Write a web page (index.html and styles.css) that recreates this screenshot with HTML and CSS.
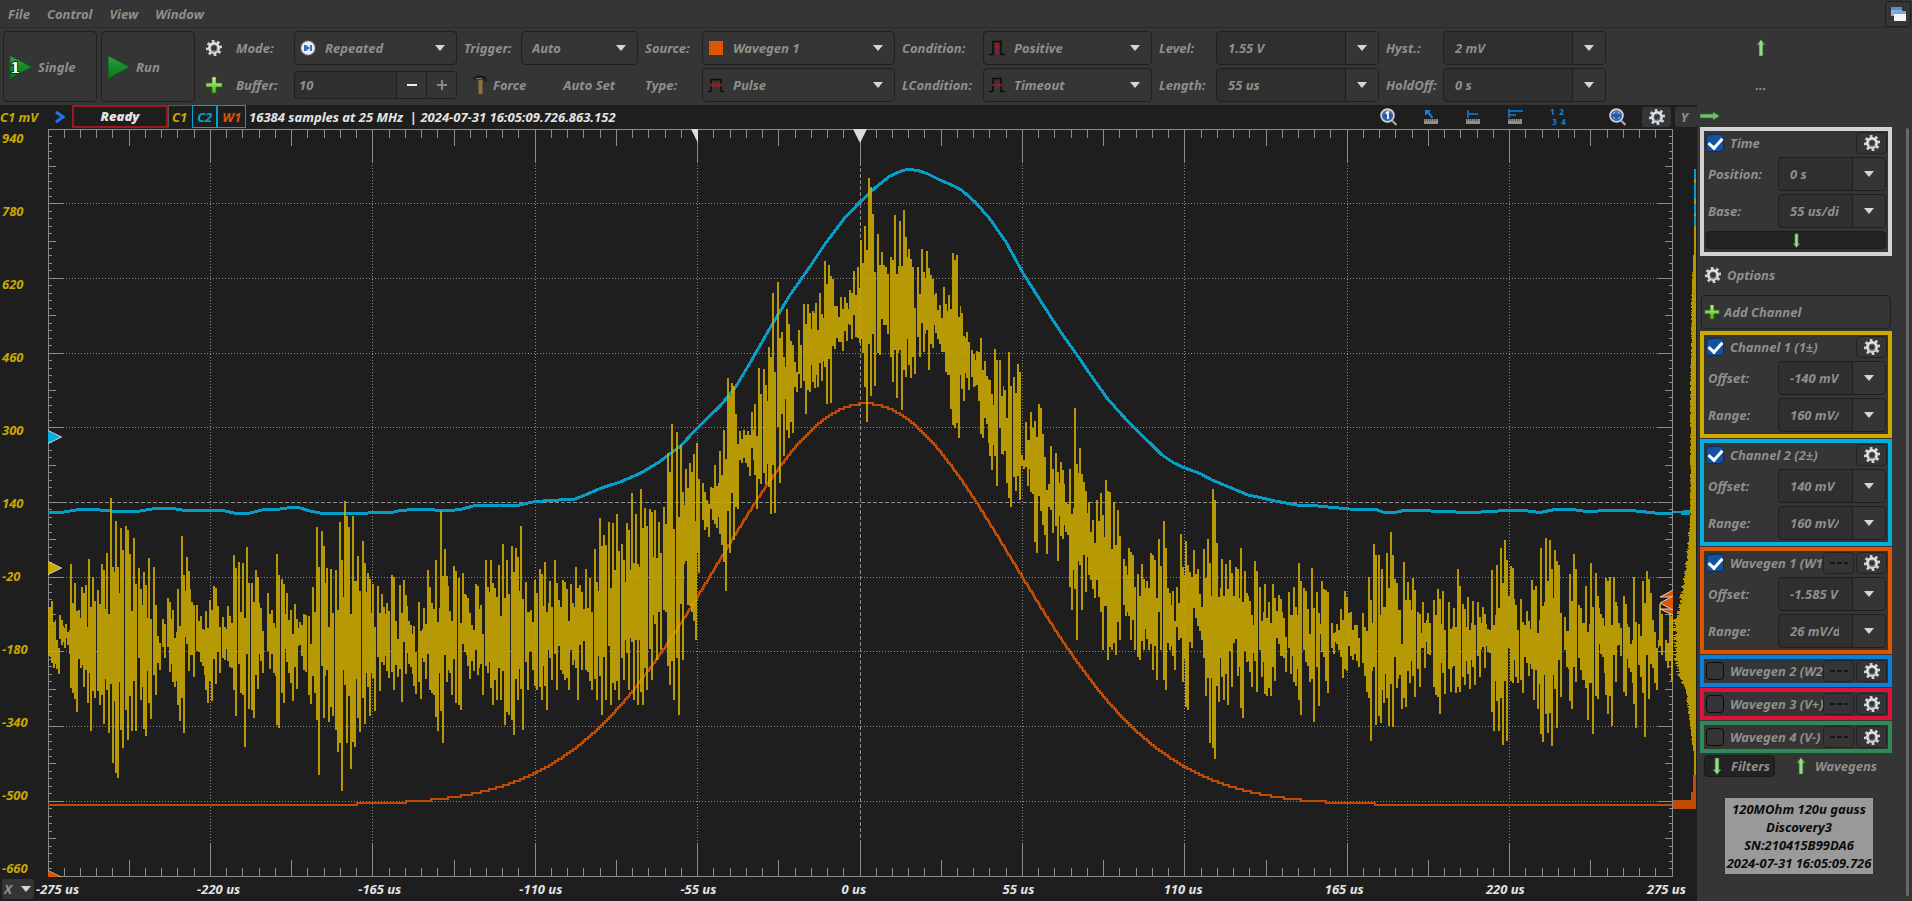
FILE: index.html
```html
<!DOCTYPE html>
<html lang="en">
<head>
<meta charset="utf-8">
<title>Scope</title>
<link rel="stylesheet" href="styles.css">
</head>
<body>
<svg class="defs" aria-hidden="true">
  <defs>
    <linearGradient id="gPlay" x1="0" y1="0" x2="0" y2="1"><stop offset="0" stop-color="#3fa04a"/><stop offset=".5" stop-color="#158a28"/><stop offset="1" stop-color="#0f7a20"/></linearGradient>
    <linearGradient id="gPlus" x1="0" y1="0" x2="0" y2="1"><stop offset="0" stop-color="#c8f09a"/><stop offset="1" stop-color="#46b814"/></linearGradient>
    <linearGradient id="gArrow" x1="0" y1="0" x2="1" y2="0"><stop offset="0" stop-color="#4faa45"/><stop offset=".5" stop-color="#a4e09a"/><stop offset="1" stop-color="#3f9a38"/></linearGradient>
    <linearGradient id="gLens" x1="0" y1="0" x2="0" y2="1"><stop offset="0" stop-color="#6d8fc8"/><stop offset=".5" stop-color="#2a559f"/><stop offset="1" stop-color="#2f78c8"/></linearGradient>
    <symbol id="gear" viewBox="0 0 18 18">
      <circle cx="9" cy="9" r="6.7" fill="none" stroke="#cfd6da" stroke-width="2.8" stroke-dasharray="2.6 2.662" transform="rotate(-20 9 9)"/>
      <circle cx="9" cy="9" r="4.5" fill="none" stroke="#dde2e5" stroke-width="3"/>
      <path d="M6 11.500A4 4 0 0 0 12.400 11" fill="none" stroke="#9aa3a8" stroke-width="1.500"/>
      <circle cx="9" cy="9" r="3" fill="none" stroke="#59666e" stroke-width="1"/>
    </symbol>
    <symbol id="plus" viewBox="0 0 18 18"><path d="M7 1h4v6h6v4h-6v6H7v-6H1V7h6z" fill="url(#gPlus)" stroke="#2c6e12" stroke-width=".6"/></symbol>
    <symbol id="up" viewBox="0 0 10 18"><path d="M5 .5L9.200 6H7v11H3V6H.8z" fill="url(#gArrow)" stroke="#2c6a2a" stroke-width=".6"/></symbol>
    <symbol id="down" viewBox="0 0 10 18"><path d="M5 17.500L.8 12.500H3V1h4v11.500h2.200z" fill="url(#gArrow)" stroke="#2c6a2a" stroke-width=".6"/></symbol>
    <symbol id="lens" viewBox="0 0 18 18"><path d="M12.500 13l4 4" stroke="#a9a9a4" stroke-width="2.200"/><circle cx="7.500" cy="7.500" r="6.400" fill="url(#gLens)" stroke="#d2d2d2" stroke-width="1.800"/></symbol>
    <symbol id="ruler" viewBox="0 0 14 5"><path d="M0 0h14v5H0z" fill="#8f8f8f"/><path d="M1.500 0v2M3.500 0v2M5.500 0v2M7.500 0v2M9.500 0v2M11.500 0v2" stroke="#555"/></symbol>
    <symbol id="line" viewBox="0 0 20 4"><path d="M1 2h5M8 2h5M15 2h4" stroke="#0c0c0c" stroke-width="1.500"/></symbol>
  </defs>
</svg>

<nav class="menubar">
  <button>File</button><button>Control</button><button>View</button><button>Window</button>
  <button class="dock" aria-label="Windows"><svg width="16" height="16" viewBox="0 0 16 16"><path d="M1 1h11v9H1z" fill="#8fb0dc"/><path d="M1 1h11v3H1z" fill="#5d8ccc"/><path d="M4 5h12v10H4z" fill="#f2f5fb"/><path d="M4 5h12v3H4z" fill="#7aa4e0"/></svg></button>
</nav>

<section class="toolbar">
  <button class="run"><svg width="24" height="26" viewBox="0 0 24 26"><path d="M1 1.500L23 13 1 24.500z" fill="url(#gPlay)" stroke="#0b5a18"/><text x="1" y="19" class="one">1</text></svg>Single</button>
  <button class="run"><svg width="24" height="26" viewBox="0 0 24 26"><path d="M1 1.500L23 13 1 24.500z" fill="url(#gPlay)" stroke="#0b5a18"/></svg>Run</button>
  <button class="flat" aria-label="Settings"><svg width="18" height="18"><use href="#gear"/></svg></button>
  <label for="mode">Mode:</label>
  <span class="select icon"><svg width="16" height="16" viewBox="0 0 16 16"><circle cx="8" cy="8" r="7" fill="#e9edf5" stroke="#999"/><path d="M5 5v6M11 5v6" stroke="#3a6cb8" stroke-width="2"/><path d="M6 5l4 3-4 3z" fill="#3a6cb8"/></svg><select id="mode"><option>Repeated</option></select></span>
  <label for="trig">Trigger:</label>
  <span class="select"><select id="trig"><option>Auto</option></select></span>
  <label for="src">Source:</label>
  <span class="select icon"><svg width="16" height="16" viewBox="0 0 16 16"><path d="M1 1h14v14H1z" fill="#dd5500"/></svg><select id="src"><option>Wavegen 1</option></select></span>
  <label for="cond">Condition:</label>
  <span class="select icon"><svg width="16" height="16" viewBox="0 0 16 16"><path d="M0 14.500h4V1.500h8v13h4" fill="none" stroke="#0c0c0c" stroke-width="1.500"/><path d="M8 15V5" stroke="#a01820" stroke-width="2"/><path d="M5 7l3-5 3 5z" fill="#a01820"/></svg><select id="cond"><option>Positive</option></select></span>
  <label for="level">Level:</label>
  <span class="combo"><input id="level" value="1.55 V"><button aria-label="Level list"></button></span>
  <label for="hyst">Hyst.:</label>
  <span class="combo"><input id="hyst" value="2 mV"><button aria-label="Hysteresis list"></button></span>
  <button class="flat" aria-label="Collapse"><svg width="10" height="18"><use href="#up"/></svg></button>

  <button class="flat second" aria-label="Add"><svg width="18" height="18"><use href="#plus"/></svg></button>
  <label for="buf">Buffer:</label>
  <span class="spin"><input id="buf" value="10"><button class="lit" aria-label="Less"></button><button class="more" aria-label="More"></button></span>
  <span class="actions"><button><svg width="14" height="20" viewBox="0 0 14 20"><path d="M1 4q5-4 11-1l1 3" fill="none" stroke="#1b1b1b" stroke-width="3"/><path d="M3 3.500h6" stroke="#777"/><path d="M5.500 5h4v14h-4z" fill="#93713a"/></svg>Force</button><button class="autoset">Auto Set</button></span>
  <label for="type">Type:</label>
  <span class="select icon"><svg width="16" height="16" viewBox="0 0 16 16"><path d="M0 14.500h3V2.500h10v12h3" fill="none" stroke="#0c0c0c" stroke-width="1.500"/><path d="M3 8h10" stroke="#a01820" stroke-width="2"/><path d="M1.500 8L6 5v6zM14.500 8L10 5v6z" fill="#a01820"/></svg><select id="type"><option>Pulse</option></select></span>
  <label for="lcond">LCondition:</label>
  <span class="select icon"><svg width="16" height="16" viewBox="0 0 16 16"><path d="M0 14.500h4V1.500h8v13h4" fill="none" stroke="#0c0c0c" stroke-width="1.500"/><path d="M3 8h9" stroke="#a01820" stroke-width="1.500"/><path d="M13 8L8 5v6z" fill="#a01820"/></svg><select id="lcond"><option>Timeout</option></select></span>
  <label for="len">Length:</label>
  <span class="combo"><input id="len" value="55 us"><button aria-label="Length list"></button></span>
  <label for="hold">HoldOff:</label>
  <span class="combo"><input id="hold" value="0 s"><button aria-label="HoldOff list"></button></span>
  <button class="flat">...</button>
</section>

<main class="scope">
  <header class="status">
    <span class="unit">C1 mV</span>
    <svg width="12" height="14" viewBox="0 0 12 14"><path d="M2 2l7 5-7 5" fill="none" stroke="#1f74f0" stroke-width="3"/></svg>
    <strong class="state">Ready</strong>
    <button class="tag c1">C1</button><button class="tag c2">C2</button><button class="tag w1">W1</button>
    <span class="info">16384 samples at 25 MHz  | 2024-07-31 16:05:09.726.863.152</span>
    <span class="tools">
      <button aria-label="Zoom 1"><svg width="18" height="18" viewBox="0 0 18 18"><use href="#lens"/><path d="M6 5.500L8 4v7" fill="none" stroke="#fff" stroke-width="1.700"/></svg></button>
      <button aria-label="Cursor"><svg width="16" height="16" viewBox="0 0 16 16"><path d="M2 1h6L6.200 3l4 5-1.500 1.500-4-5L2 6.500z" fill="#0a84e8"/><use href="#ruler" x="1" y="10" width="14" height="5"/></svg></button>
      <button aria-label="X cursor"><svg width="16" height="16" viewBox="0 0 16 16"><path d="M3 1v8M3 5h10" stroke="#0a84e8" stroke-width="1.500" fill="none"/><use href="#ruler" x="1" y="10" width="14" height="5"/></svg></button>
      <button aria-label="Y cursor"><svg width="16" height="16" viewBox="0 0 16 16"><path d="M2 0v9M2 2h14M2 6h7" stroke="#0a84e8" stroke-width="1.500" fill="none"/><use href="#ruler" x="1" y="10" width="14" height="5"/></svg></button>
      <button class="nums" aria-label="Labels"><span>1</span><span>2</span><span class="low">3</span><span class="low">4</span></button>
      <button class="wide" aria-label="Zoom fit"><svg width="18" height="18" viewBox="0 0 18 18"><use href="#lens"/><path d="M4 6l2-2M11 6L9 4M4 9l2 2M11 9l-2 2" stroke="#a9c4ee"/></svg></button>
      <button class="box" aria-label="Plot settings"><svg width="18" height="18"><use href="#gear"/></svg></button>
      <button class="box ybtn">Y</button>
    </span>
  </header>
  <div class="yaxis"><span>940</span><span>780</span><span>620</span><span>460</span><span>300</span><span>140</span><span>-20</span><span>-180</span><span>-340</span><span>-500</span><span>-660</span></div>
  <div class="plot"><svg id="plot" viewBox="48 129 1649 748" preserveAspectRatio="none" role="img" aria-label="Oscilloscope traces"></svg></div>
  <footer class="xaxis">
    <span class="xsel"><select aria-label="X axis"><option>X</option></select></span>
    <div class="xlabels"><span>-275 us</span><span>-220 us</span><span>-165 us</span><span>-110 us</span><span>-55 us</span><span>0 us</span><span>55 us</span><span>110 us</span><span>165 us</span><span>220 us</span><span>275 us</span></div>
  </footer>
</main>

<aside class="side">
  <button class="expand" aria-label="Collapse panel"><svg width="20" height="10" viewBox="0 0 20 10"><path d="M0 3h13V.8L19.500 5 13 9.200V7H0z" fill="#6fbf66" stroke="#2c6a2a" stroke-width=".6"/></svg></button>
  <div class="panel time">
    <div class="head"><input type="checkbox" id="t" checked><label for="t">Time</label><button class="cfg" aria-label="Time settings"><svg width="18" height="18"><use href="#gear"/></svg></button></div>
    <div class="row"><label for="tp">Position:</label><span class="combo"><input id="tp" value="0 s"><button aria-label="Position list"></button></span></div>
    <div class="row"><label for="tb">Base:</label><span class="combo"><input id="tb" value="55 us/div"><button aria-label="Base list"></button></span></div>
    <button class="drop" aria-label="More"><svg width="9" height="15"><use href="#down"/></svg></button>
  </div>
  <button class="options"><svg width="18" height="18"><use href="#gear"/></svg>Options</button>
  <button class="add"><svg width="16" height="16"><use href="#plus"/></svg>Add Channel</button>
  <div class="panels">
    <div class="panel ch1">
      <div class="head"><input type="checkbox" id="c1" checked><label for="c1">Channel 1 (1±)</label><button class="cfg" aria-label="Channel 1 settings"><svg width="18" height="18"><use href="#gear"/></svg></button></div>
      <div class="row"><label for="c1o">Offset:</label><span class="combo"><input id="c1o" value="-140 mV"><button aria-label="Offset list"></button></span></div>
      <div class="row"><label for="c1r">Range:</label><span class="combo"><input id="c1r" value="160 mV/div"><button aria-label="Range list"></button></span></div>
    </div>
    <div class="panel ch2">
      <div class="head"><input type="checkbox" id="c2" checked><label for="c2">Channel 2 (2±)</label><button class="cfg" aria-label="Channel 2 settings"><svg width="18" height="18"><use href="#gear"/></svg></button></div>
      <div class="row"><label for="c2o">Offset:</label><span class="combo"><input id="c2o" value="140 mV"><button aria-label="Offset list"></button></span></div>
      <div class="row"><label for="c2r">Range:</label><span class="combo"><input id="c2r" value="160 mV/div"><button aria-label="Range list"></button></span></div>
    </div>
    <div class="panel wg1">
      <div class="head"><input type="checkbox" id="w1" checked><label for="w1">Wavegen 1 (W1</label><button class="cfg" aria-label="Wavegen 1 line"><svg width="20" height="4"><use href="#line"/></svg></button><button class="cfg" aria-label="Wavegen 1 settings"><svg width="18" height="18"><use href="#gear"/></svg></button></div>
      <div class="row"><label for="w1o">Offset:</label><span class="combo"><input id="w1o" value="-1.585 V"><button aria-label="Offset list"></button></span></div>
      <div class="row"><label for="w1r">Range:</label><span class="combo"><input id="w1r" value="26 mV/div"><button aria-label="Range list"></button></span></div>
    </div>
    <div class="panel wg2"><div class="head"><input type="checkbox" id="w2"><label for="w2">Wavegen 2 (W2</label><button class="cfg" aria-label="Wavegen 2 line"><svg width="20" height="4"><use href="#line"/></svg></button><button class="cfg" aria-label="Wavegen 2 settings"><svg width="18" height="18"><use href="#gear"/></svg></button></div></div>
    <div class="panel wg3"><div class="head"><input type="checkbox" id="w3"><label for="w3">Wavegen 3 (V+)</label><button class="cfg" aria-label="Wavegen 3 line"><svg width="20" height="4"><use href="#line"/></svg></button><button class="cfg" aria-label="Wavegen 3 settings"><svg width="18" height="18"><use href="#gear"/></svg></button></div></div>
    <div class="panel wg4"><div class="head"><input type="checkbox" id="w4"><label for="w4">Wavegen 4 (V-)</label><button class="cfg" aria-label="Wavegen 4 line"><svg width="20" height="4"><use href="#line"/></svg></button><button class="cfg" aria-label="Wavegen 4 settings"><svg width="18" height="18"><use href="#gear"/></svg></button></div></div>
  </div>
  <div class="tabs"><button class="on"><svg width="10" height="18"><use href="#down"/></svg>Filters</button><button><svg width="10" height="18"><use href="#up"/></svg>Wavegens</button></div>
  <p class="note">120MOhm 120u gauss<br>Discovery3<br>SN:210415B99DA6<br>2024-07-31 16:05:09.726</p>
</aside>
<script src="plot.js"></script>
</body>
</html>
```

FILE: styles.css
```css
* { box-sizing: border-box; }
body {
  margin: 0; min-height: 100vh; background: #353535; color: #8f8f8b;
  font: italic 700 13px/18px "Noto Sans", "Open Sans", sans-serif;
  display: grid; grid-template-columns: minmax(0, 1fr) 215px; grid-template-rows: 28px 77px minmax(0, 1fr);
}
.defs { position: absolute; width: 0; height: 0; }
svg { display: block; flex: none; }
button, input, select { font: inherit; color: inherit; background: none; border: 0; margin: 0; padding: 0; border-radius: 0; min-width: 0; }
input, select { outline: 0; }
label { white-space: nowrap; overflow: hidden; }

.menubar { grid-column: 1 / -1; display: flex; gap: 17px; align-items: center; padding: 0 1px 0 8px; border-bottom: 1px solid #2a2a2a; }
.dock { margin-left: auto; width: 26px; height: 26px; border: 1px solid #1f1f1f; border-radius: 4px; display: grid; place-items: center; }

.toolbar {
  grid-column: 1 / -1; display: grid; gap: 3px 4px; padding: 3px 0 3px 3px; align-items: center; grid-template-rows: 34px 34px;
  grid-template-columns: 94px 94px 30px 57px minmax(90px, 163px) 56px minmax(80px, 117px) 56px minmax(90px, 193px) 80px minmax(90px, 169px) 56px minmax(80px, 163px) 56px minmax(80px, 163px) minmax(20px, 1fr);
}
.toolbar label { padding-left: 3px; }
.run { grid-row: span 2; height: 71px; border: 1px solid #1f1f1f; border-radius: 4px; display: flex; align-items: center; gap: 5px; padding-left: 5px; }
.one { font: 700 15px "DejaVu Serif", serif; fill: #fff; stroke: #222; stroke-width: 2px; paint-order: stroke; }
.flat { display: grid; place-items: center; }
.second { grid-column: 3; }
.select { position: relative; height: 34px; border: 1px solid #1f1f1f; border-radius: 4px; display: flex; }
.select select { appearance: none; flex: 1; padding: 0 28px 0 10px; }
.select.icon select { padding-left: 30px; }
.select svg { position: absolute; left: 5px; top: 8px; pointer-events: none; }
.select::after, .xsel::after { content: ""; position: absolute; right: 11px; top: 13px; border: 5px solid transparent; border-top: 6px solid #d6d6d6; border-bottom: 0; pointer-events: none; }
.combo { height: 34px; display: flex; border: 1px solid #1f1f1f; border-radius: 4px; background: #2f2f2f; overflow: hidden; }
.combo input { flex: 1; width: 0; padding: 0 13px 0 11px; }
.combo button { width: 33px; border-left: 1px solid #1f1f1f; background: #353535; display: grid; place-items: center; }
.combo button::before { content: ""; border: 5px solid transparent; border-top: 6px solid #d6d6d6; border-bottom: 0; }
.spin { height: 28px; display: flex; border: 1px solid #1f1f1f; border-radius: 4px; background: #2f2f2f; }
.spin input { flex: 1; width: 0; padding: 0 4px; }
.spin button { width: 30px; border-left: 1px solid #1f1f1f; background: #353535; display: grid; place-items: center; }
.spin button::before, .more::after { content: ""; grid-area: 1 / 1; width: 10px; height: 2px; background: #888; }
.spin .lit::before { background: #eee; }
.spin .more::after { width: 2px; height: 10px; }
.actions { grid-column: span 2; display: flex; align-items: center; padding-left: 12px; }
.actions button { display: flex; align-items: center; gap: 6px; }
.actions .autoset { margin-left: 37px; }

.scope { background: #1e1e1e; display: grid; grid-template-columns: 48px minmax(0, 1fr); grid-template-rows: 24px minmax(0, 1fr) 24px; }
.status { grid-column: 1 / -1; display: flex; align-items: center; color: #e4e4e4; white-space: nowrap; overflow: hidden; padding-bottom: 1px; }
.unit { width: 54px; color: #c9a800; }
.state { width: 96px; height: 23px; line-height: 19px; margin-left: 6px; border: 2px solid #9e1820; text-align: center; }
.tag { height: 23px; border: 1px solid; padding: 0 4px; }
.tag.c1 { color: #c9a800; border-color: #555 transparent transparent #555; padding-left: 3px; }
.tag.c2 { color: #05a5d0; }
.tag.w1 { color: #dd5500; }
.info { padding-left: 3px; white-space: pre; }
.tools { margin-left: auto; display: flex; align-items: center; }
.tools button { width: 42px; display: grid; place-items: center; }
.tools .wide { width: 64px; padding-left: 16px; }
.tools .box { width: 29px; height: 20px; background: #353535; border-radius: 3px; }
.tools .ybtn { width: 22px; margin-left: 4px; padding-right: 3px; color: #8f8f8b; }
.tools .nums { grid-template-columns: 9px 9px; justify-content: center; font: 700 8px/10px "Noto Sans", sans-serif; color: #0a84e8; }
.nums .low { padding-left: 4px; }
.yaxis { display: flex; flex-direction: column; justify-content: space-between; color: #c9a800; padding-left: 2px; }
.plot { position: relative; min-height: 300px; }
.plot svg { position: absolute; inset: 0; width: 100%; height: 100%; }
.xaxis { grid-column: 1 / -1; display: flex; align-items: center; color: #e4e4e4; }
.xsel { position: relative; width: 32px; height: 20px; margin: 0 2px; background: #353535; border-radius: 3px; color: #8f8f8b; display: flex; }
.xsel select { appearance: none; flex: 1; padding-left: 2px; }
.xsel::after { right: 3px; top: 7px; }
.xlabels { flex: 1; display: grid; grid-template-columns: repeat(10, minmax(0, 1fr)) 50px; white-space: nowrap; }

.side { padding: 0 20px 5px 3px; position: relative; }
.side::after { content: ""; position: absolute; right: 3px; top: 23px; bottom: 5px; width: 3px; border-radius: 2px; background: #686868; }
.expand { display: flex; height: 22px; align-items: center; }
.panel { border: 4px solid; padding: 1px 1px 2px 2px; display: grid; grid-template-columns: minmax(0, 1fr); gap: 3px; }
.panels { display: grid; grid-template-columns: minmax(0, 1fr); gap: 1px; }
.time { border-color: #d4d2d2; padding-bottom: 3px; }
.ch1 { border-color: #cfa800; }
.ch2 { border-color: #05aedc; }
.wg1 { border-color: #dd5500; }
.wg2 { border-color: #0780de; padding-bottom: 1px; }
.wg3 { border-color: #dc143c; padding-bottom: 1px; }
.wg4 { border-color: #2e8b57; padding-bottom: 1px; }
.head { display: flex; height: 22px; align-items: center; gap: 2px; }
.head label { flex: 1; min-width: 0; margin: 0 -2px 0 4px; }
.head .cfg { width: 31px; height: 22px; border: 1px solid #222; border-radius: 4px; display: grid; place-items: center; flex: none; }
.head input { appearance: none; width: 18px; height: 18px; border: 1px solid #0b0b0b; border-radius: 4px; flex: none; display: grid; place-items: center; }
.head input:checked { background: #15529e; border-color: #0a2c58; }
.head input:checked::before { content: ""; width: 6px; height: 11px; border: solid #fff; border-width: 0 3px 3px 0; transform: rotate(42deg); margin-bottom: 3px; }
.row { display: grid; grid-template-columns: 72px minmax(0, 1fr); align-items: center; padding-right: 1px; }
.row label { padding-left: 2px; }
.drop { height: 18px; border: 1px solid #1b1b1b; border-radius: 4px; background: #232323; display: grid; place-items: center; margin-right: 1px; }
.options { display: flex; align-items: center; gap: 5px; height: 39px; padding: 0 0 2px 4px; }
.add { display: flex; align-items: center; gap: 4px; width: 190px; height: 34px; margin: 0 0 2px 1px; padding-left: 2px; border: 1px solid #1f1f1f; border-radius: 4px; }
.tabs { display: flex; gap: 21px; padding: 2px 0 0 4px; }
.tabs button { display: flex; align-items: center; height: 22px; gap: 9px; }
.tabs .on { width: 71px; padding-left: 7px; border: 1px solid #1b1b1b; border-radius: 4px; background: #232323; }
.note { margin: 21px 19px 0 25px; padding: 2px 0; background: #999; color: #0c0c0c; text-align: center; white-space: nowrap; }
```

FILE: plot.js
```js
const svg = document.getElementById('plot');
const L = 48, T = 129, R = 1673, B = 877, DX = 162.4, DY = 74.7;

function add(tag, attrs) {
  const el = document.createElementNS('http://www.w3.org/2000/svg', tag);
  for (const k in attrs) el.setAttribute(k, attrs[k]);
  svg.appendChild(el);
}
function line(d, color, width, extra) {
  add('path', Object.assign({ d, fill: 'none', stroke: color, 'stroke-width': width, 'shape-rendering': 'crispEdges' }, extra));
}

// grid and ticks
let ticks = '', dots = '', dashes = '';
for (let i = 1; i < 100; i++) {
  const x = Math.floor(L + i * DX / 10) + .5;
  const n = i % 10 === 0 ? 33 : i % 5 === 0 ? 17 : 9;
  ticks += `M${x} ${T}v${n}M${x} ${B}v${-n}`;
  const y = Math.floor(T + i * DY / 10) + .5;
  const m = i % 10 === 0 ? 15 : i % 5 === 0 ? 8 : 4;
  ticks += `M${L} ${y}h${m}M${R} ${y}h${-m}`;
  if (i % 10 === 0) {
    const v = `M${x} ${T + 33}V${B - 33}`, h = `M${L + 15} ${y}H${R - 15}`;
    if (i === 50) dashes += v + h; else dots += v + h;
  }
}
line(`M48.5 129.500H1672.500V876.500H48.500z`, '#8c8c8c', 1);
line(ticks, '#8c8c8c', 1);
line(dots, '#8c8c8c', 1, { 'stroke-dasharray': '1 2' });
line(dashes, '#8c8c8c', 1, { 'stroke-dasharray': '4 2' });

// wavegen: gaussian pulse quantised by the converter
let g = '', last = null;
for (let x = 48; x <= 1672; x++) {
  const y = 805 - 2 * Math.round(401.5 * Math.exp(-((x - 865.5) ** 2) / (2 * 147 * 147)) / 2);
  g += last === null ? `M${x} ${y}` : y !== last ? `H${x}V${y}` : '';
  last = y;
}
line(g + 'H1672', '#bf4c06', 2);

// channel 2
const ch2 = [48,512.5,64,512,76,510,90,509,110,511,140,511,155,508.5,170,508,185,510.5,212,510.5,225,511,238,514,250,513,262,510,280,509,290,507.5,300,508,310,511,322,513.5,345,513.5,392,512.5,400,510.5,420,509,435,510,448,511,462,509,475,505.5,500,505,515,506,535,501.5,575,499,584,495.5,600,488.5,620,482,640,473.5,660,461.5,680,446.5,697,428.5,720,406,735,388,750,363,770,328,790,295,810,266.5,825,244,845,217.5,860,202,875,188,890,176,900,171.5,905,170,910,169.5,918,170.5,928,174,940,180,955,186.5,962,190.5,975,202,990,219,1006,242,1023,273,1040,300,1060,331,1076,353.5,1090,374,1107,398,1122,415,1136,429.5,1152,445,1162,455,1174,463,1185,468,1200,473.5,1212,480,1235,489.5,1248,495,1260,497.5,1275,501,1297,505,1318,506,1349,509,1376,509.5,1383,512,1397,512,1404,510.5,1424,510.5,1438,511.5,1473,512.5,1490,511.5,1507,510.5,1524,510.5,1540,512.5,1555,509.5,1573,509.5,1586,511.5,1610,510.5,1631,510.5,1655,513,1672,514];
line('M' + ch2.join(' '), '#069ec6', 3, { 'stroke-linejoin': 'round' });

// channel 1: position, upper peak, lower peak
const ch1 = `49 607 657,52 601 668,57 640 674,60 615 645,63 626 648,66 624 645,71 564 693,75 583 712,79 610 668,82 587 687,86 585 703,89 559 731,93 577 698,98 590 705,102 564 724,107 553 733,111 498 763,116 521 778,121 528 748,126 526 740,130 554 731,134 538 731,139 568 700,144 572 736,149 558 719,154 567 695,158 636 670,163 619 658,168 598 672,173 610 687,178 589 721,182 536 733,187 557 671,192 602 677,197 605 652,201 616 666,206 611 703,210 600 701,214 586 684,218 606 673,223 617 660,228 606 667,234 555 716,239 562 693,243 563 747,247 547 709,252 583 718,256 570 689,261 608 673,268 593 669,272 610 673,277 554 728,282 579 703,287 593 673,291 610 701,295 604 689,300 622 656,304 614 672,309 616 704,313 587 693,317 527 775,322 531 718,327 568 722,331 569 716,336 570 752,340 522 791,345 501 743,349 527 769,353 516 747,358 556 732,363 541 724,368 573 716,373 584 711,378 586 691,382 594 665,387 603 678,392 575 690,396 621 677,400 585 702,404 580 674,409 621 667,414 626 694,419 602 699,424 608 679,428 570 690,432 603 695,436 560 731,441 511 743,445 549 682,450 611 695,454 566 703,459 578 710,463 573 652,468 598 679,472 625 671,476 584 675,481 605 695,486 560 673,491 560 705,495 588 700,499 565 700,503 544 725,507 560 715,512 546 735,516 548 700,521 526 730,526 582 690,531 610 670,535 580 690,540 569 700,545 562 710,550 581 680,555 560 690,559 600 670,563 580 680,567 589 690,571 584 665,576 567 700,580 585 670,586 569 672,590 578 690,595 549 700,600 518 715,604 535 700,609 522 705,613 523 690,617 514 700,622 544 680,627 523 690,632 493 700,636 514 705,641 489 705,645 508 690,650 509 680,655 510 660,659 522 650,664 507 612,668 453 685,672 424 700,677 432 715,681 445 660,686 469 605,690 463 612,694 454 640,697 443 573,703 483 530,707 500 537,711 487 520,715 465 528,720 451 545,724 430 591,728 378 553,732 383 540,736 414 509,740 431 463,744 430 463,748 431 476,752 412 460,755 404 509,759 368 484,764 369 484,769 347 514,773 293 513,778 282 483,782 332 456,787 309 438,791 341 433,795 362 392,799 330 388,804 304 414,808 304 392,813 311 388,816 303 387,820 293 381,825 261 404,829 265 403,833 279 349,837 306 342,841 297 351,845 297 341,850 290 339,854 271 337,858 267 343,861 240 353,865 226 422,869 178 396,873 214 386,878 234 355,882 252 325,886 267 334,891 257 382,895 215 398,900 221 410,904 210 377,909 249 378,913 267 374,918 267 357,922 249 352,927 251 370,931 275 348,936 293 339,940 305 352,944 287 372,949 295 409,953 253 428,957 255 438,962 313 401,967 332 390,972 350 387,977 351 401,981 338 438,985 361 424,990 380 470,995 349 486,1000 360 454,1005 390 483,1009 352 507,1014 377 491,1018 364 500,1022 455 469,1026 422 486,1031 412 494,1035 421 553,1039 404 511,1045 457 554,1051 446 533,1056 453 561,1061 462 539,1066 503 535,1070 469 610,1075 408 640,1080 448 610,1084 482 592,1089 502 580,1093 520 598,1097 500 597,1101 493 650,1106 480 660,1110 492 650,1114 502 655,1118 510 640,1124 559 616,1129 548 640,1133 555 650,1138 574 660,1142 564 650,1147 581 650,1151 553 670,1155 560 680,1159 539 650,1164 521 690,1168 588 650,1173 591 670,1177 587 640,1181 534 682,1186 541 710,1190 572 648,1194 550 618,1200 594 640,1204 549 696,1208 539 743,1213 489 759,1217 543 702,1222 559 700,1226 564 705,1230 560 687,1236 567 676,1241 548 718,1245 571 662,1250 601 687,1255 561 692,1260 587 677,1265 584 696,1269 602 696,1273 584 681,1279 595 656,1284 618 672,1289 592 674,1294 587 686,1299 563 715,1304 588 662,1308 609 682,1312 568 722,1317 592 706,1322 581 657,1326 590 693,1332 623 654,1337 624 650,1341 609 678,1345 591 671,1351 612 660,1357 625 667,1363 613 676,1369 577 741,1374 544 725,1379 555 723,1382 569 703,1387 553 726,1391 532 727,1395 579 688,1400 610 709,1404 562 707,1408 582 683,1413 578 697,1418 612 687,1423 602 668,1428 613 655,1434 600 695,1438 589 714,1443 591 694,1449 602 692,1454 608 693,1458 569 692,1463 604 685,1468 597 689,1473 601 685,1478 602 677,1483 607 668,1488 629 653,1492 570 731,1497 565 731,1501 548 745,1505 540 741,1511 566 683,1516 605 683,1521 599 693,1527 611 676,1532 580 700,1536 586 709,1541 548 742,1546 538 733,1550 540 746,1555 550 728,1559 565 697,1565 617 667,1570 574 709,1574 554 682,1579 605 670,1586 586 720,1591 563 734,1596 573 699,1601 614 657,1606 578 714,1610 577 726,1614 577 682,1619 623 656,1624 596 696,1629 627 672,1634 577 728,1639 624 677,1643 581 737,1647 571 699,1651 593 668,1655 632 690,1660 604 655,1666 640 668,1670 613 681`
  .split(',').map(s => s.split(' ').map(Number));
let bars = '';
ch1.forEach(([x, t, b], i) => {
  const h = b - t;
  const a = Math.round(b - h * (.02 + (i * 37 % 17) / 50));
  const c = Math.round(t + h * (.02 + (i * 53 % 19) / 50));
  bars += `M${x - 1} ${t}h2V${a}h-2z`;
  bars += `M${x + 1} ${c}h2V${b}h-2z`;
  const next = ch1[i + 1];
  if (next && next[0] - x > 4 && i % 3) {
    const m0 = Math.round((t + b) / 2 - h * .22), m1 = Math.round((next[1] + next[2]) / 2 + (next[2] - next[1]) * .2);
    const w = next[0] - x - 4;
    bars += `M${x + 3} ${Math.min(m0, m1)}h${w}V${Math.max(m0, m1)}h${-w}z`;
  }
});
add('path', { d: bars, fill: '#cfae00', 'fill-opacity': .86, 'shape-rendering': 'crispEdges' });

// histogram beside the plot
const hist = [[178, 2], [240, 2], [270, 3], [300, 4], [340, 4], [400, 5], [440, 5], [490, 5], [520, 5], [560, 8], [590, 12], [610, 15], [625, 19], [650, 18], [670, 16], [690, 9], [715, 6], [735, 4], [755, 2], [800, 1]];
let hd = '';
for (let k = 0; k + 1 < hist.length; k++) {
  const [y0, w0] = hist[k], [y1, w1] = hist[k + 1];
  for (let y = y0; y < y1; y++) {
    const w = w0 + (w1 - w0) * (y - y0) / (y1 - y0);
    const j = w > 3 ? (Math.abs(Math.sin(y * 12.9898) * 43758.5453) % 1) * w * .3 : 0;
    hd += `M${1696 - Math.round(w + j)} ${y}H1696v1H${1696 - Math.round(w + j)}z`;
  }
}
add('path', { d: hd, fill: '#b69803', 'shape-rendering': 'crispEdges' });
add('path', { d: 'M1694 169h2v10h-2zM1694 183h2v16h-2zM1694 204h2v9h-2zM1694 216h2v10h-2zM1673 511h10v-1h7v5h-9v-2h-8z', fill: '#069ec6' });
add('path', { d: 'M1673 800h18v-8h2v-17h3v34h-23z', fill: '#bf4c06' });

// markers
add('path', { d: 'M691 129h7v14zM853 129h14l-7 14z', fill: '#dcdcdc' });
function marker(d, fill) { add('path', { d, fill, stroke: '#d0d0d0', 'stroke-width': 1 }); }
marker('M48 430.500L61.500 437 48 443.500', '#05aedf');
marker('M48 561.500L61.500 568 48 574.500', '#cfa800');
marker('M48 870.500L61 877', '#dd5500');
add('path', { d: 'M48 871l12 6H48z', fill: '#dd5500' });
marker('M1673 590L1660 597H1673', '#dd5500');
marker('M1673 615L1660 609H1673', '#dd5500');
marker('M1673 596L1660 603L1673 610', '#dd5500');
```
